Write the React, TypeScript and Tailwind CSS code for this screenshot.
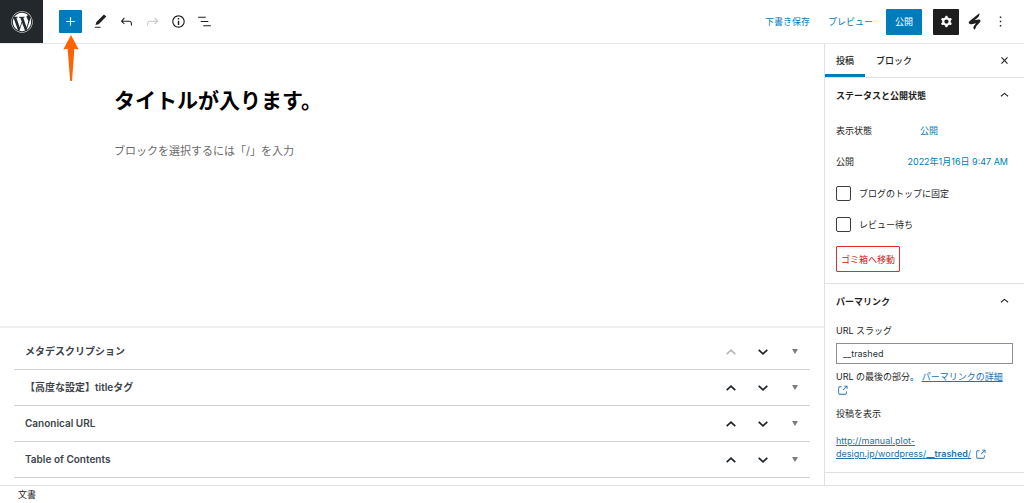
import React, { useState } from "react";
import { FaWordpress } from "react-icons/fa";

const icons = {
  plus: "M18 11.2h-5.2V6h-1.6v5.2H6v1.6h5.2V18h1.6v-5.2H18z",
  edit: "M20.1 5.1L16.9 2 6.2 12.7l-1.3 4.4 4.5-1.3L20.1 5.1zM4 20.8h8v-1.5H4v1.5z",
  undo: "M18.3 11.7c-.6-.6-1.4-.9-2.3-.9H6.7l2.9-3.3-1.1-1-4.5 5L8.5 16l1-1-2.7-2.7H16c.5 0 .9.2 1.3.5 1 1 1 3.4 1 4.5v.3h1.5v-.2c0-1.5 0-4.3-1.5-5.7z",
  redo: "M15.6 6.5l-1.1 1 2.9 3.3H8c-.9 0-1.7.3-2.3.9-1.4 1.5-1.4 4.2-1.4 5.6v.2h1.5v-.3c0-1.1 0-3.5 1-4.5.3-.3.7-.5 1.3-.5h9.2L14.5 15l1.1 1.1 4.6-4.6-4.6-5z",
  info: "M12 3.2c-4.8 0-8.8 3.9-8.8 8.8 0 4.8 3.9 8.8 8.8 8.8 4.8 0 8.8-3.9 8.8-8.8 0-4.8-4-8.8-8.8-8.8zm0 16c-4 0-7.2-3.3-7.2-7.2C4.8 8 8 4.8 12 4.8s7.2 3.3 7.2 7.2c0 4-3.2 7.2-7.2 7.2zM11 17h2v-6h-2v6zm0-8h2V7h-2v2z",
  list: "M13.8 5.2H3v1.5h10.8V5.2zm-3.6 12v1.5H21v-1.5H10.2zm7.2-6H6.6v1.5h10.8v-1.5z",
  cog: "M10.289 4.836A1 1 0 0111.275 4h1.306a1 1 0 01.987.836l.244 1.466c.787.26 1.503.679 2.108 1.218l1.393-.522a1 1 0 011.216.437l.653 1.13a1 1 0 01-.23 1.273l-1.148.944a6.025 6.025 0 010 2.435l1.149.946a1 1 0 01.23 1.272l-.653 1.13a1 1 0 01-1.216.437l-1.394-.522c-.605.54-1.32.958-2.108 1.218l-.244 1.466a1 1 0 01-.987.836h-1.306a1 1 0 01-.986-.836l-.244-1.466a5.995 5.995 0 01-2.108-1.218l-1.394.522a1 1 0 01-1.217-.436l-.653-1.131a1 1 0 01.23-1.272l1.149-.946a6.026 6.026 0 010-2.435l-1.148-.944a1 1 0 01-.23-1.272l.653-1.131a1 1 0 011.217-.437l1.393.522a5.994 5.994 0 012.108-1.218l.244-1.466zM14.929 12a3 3 0 11-6 0 3 3 0 016 0z",
  more: "M13 19h-2v-2h2v2zm0-6h-2v-2h2v2zm0-6h-2V5h2v2z",
  close: "M12 13.06l3.712 3.713 1.061-1.06L13.061 12l3.712-3.712-1.06-1.06L12 10.938 8.288 7.227l-1.061 1.06L10.939 12l-3.712 3.712 1.06 1.061L12 13.061z",
  up: "M6.5 12.4L12 8l5.5 4.4-.9 1.2L12 10l-4.5 3.6-1-1.2z",
  external: "M18.2 17c0 .7-.6 1.2-1.2 1.2H7c-.7 0-1.2-.6-1.2-1.2V7c0-.7.6-1.2 1.2-1.2h3.2V4.2H7C5.5 4.2 4.2 5.5 4.2 7v10c0 1.5 1.2 2.8 2.8 2.8h10c1.5 0 2.8-1.2 2.8-2.8v-3.6h-1.5V17zM14.9 3v1.5h3.7l-6.4 6.4 1.1 1.1 6.4-6.4v3.7h1.5V3h-6.3z",
  brush: "M18.8.4C19.6 2.600 18.400 5 16.300 6.700l-4.300 3.500 5.500-1c3-.5 3.800 1.800 2.200 3.700l-5.500 6.200c-.2 1.800-1 3.500-2.400 4.500-1.700-1.500-1.800-3.700-.4-5.500l2.800-3.600-6.400 1.300c-3.800.7-5.200-2-2.600-4.400z",
};

function Icon({ name, className = "size-[17px]" }: { name: keyof typeof icons; className?: string }) {
  return (
    <svg viewBox="0 0 24 24" fill="currentColor" fillRule="evenodd" aria-hidden="true" className={className}>
      <path d={icons[name]} />
    </svg>
  );
}

interface ToolButtonProps {
  name: keyof typeof icons;
  label: string;
  disabled?: boolean;
}

function ToolButton({ name, label, disabled }: ToolButtonProps) {
  return (
    <button
      aria-label={label}
      disabled={disabled}
      className="flex size-[26px] items-center justify-center disabled:text-[#c4c4c4]"
    >
      <Icon name={name} />
    </button>
  );
}

const metaBoxes = ["メタデスクリプション", "【高度な設定】titleタグ", "Canonical URL", "Table of Contents"];

function MetaBox({ title, first }: { title: string; first: boolean }) {
  return (
    <div className="flex h-9 items-center justify-between border-b border-[#d0d2d5] pl-[11px] text-[#3c434a]">
      <h2 className="text-[10px] font-semibold">{title}</h2>
      <div className="flex gap-[2px]">
        <button aria-label="上に移動" disabled={first} className="flex w-[30px] items-center justify-center text-[#1d2327] disabled:text-[#b5b8bb]">
          <svg viewBox="0 0 10 6" className="h-[6px] w-[10px]" fill="none" stroke="currentColor" strokeWidth="1.7">
            <path d="M.7 5.200 5 1.200l4.300 4" />
          </svg>
        </button>
        <button aria-label="下に移動" className="flex w-[30px] items-center justify-center text-[#1d2327]">
          <svg viewBox="0 0 10 6" className="h-[6px] w-[10px]" fill="none" stroke="currentColor" strokeWidth="1.7">
            <path d="M.7.800 5 4.800l4.300-4" />
          </svg>
        </button>
        <button aria-label="パネルを切り替え" className="flex w-[30px] items-center justify-center text-[#787c82]">
          <svg viewBox="0 0 6 5" className="h-[5px] w-[6px]" fill="currentColor">
            <path d="M0 0h6L3 5z" />
          </svg>
        </button>
      </div>
    </div>
  );
}

function PanelTitle({ children }: { children: React.ReactNode }) {
  return (
    <h2>
      <button className="flex h-[35px] w-full items-center justify-between text-left font-semibold">
        {children}
        <Icon name="up" />
      </button>
    </h2>
  );
}

function CheckRow({ label }: { label: string }) {
  const [checked, setChecked] = useState(false);
  return (
    <label className="flex items-center gap-2">
      <input
        type="checkbox"
        checked={checked}
        onChange={(e) => setChecked(e.target.checked)}
        className="size-[15px] appearance-none rounded-[2px] border border-[#3c3c3c] checked:bg-[#007cba]"
      />
      {label}
    </label>
  );
}

export default function App() {
  const [slug, setSlug] = useState("__trashed");

  return (
    <div className="flex h-screen flex-col overflow-hidden bg-white font-['Inter','Noto_Sans_CJK_JP',sans-serif] text-[9px] leading-[13px] text-[#1e1e1e]">
      <header className="flex h-11 shrink-0 items-center justify-between border-b border-[#e8e8e8] pr-[11px]">
        <div className="flex items-center self-stretch">
          <a href="#" aria-label="WordPress" className="flex w-[43px] items-center justify-center self-stretch bg-[#23282d] text-white">
            <FaWordpress className="size-[22px]" />
          </a>
          <div className="relative ml-4 mr-[5px]">
            <button aria-label="ブロックを追加" className="flex size-[23px] items-center justify-center rounded-[1px] bg-[#007cba] text-white">
              <Icon name="plus" />
            </button>
            <svg viewBox="0 0 16 46" className="absolute left-1/2 top-full z-10 mt-[2px] h-[46px] w-4 -translate-x-1/2" fill="#ff6200" aria-hidden="true">
              <path d="M8 0 15.700 14.500 11.400 13.700 9 46H7.200L4.600 13.700.3 14.500z" />
            </svg>
          </div>
          <ToolButton name="edit" label="ツール" />
          <ToolButton name="undo" label="元に戻す" />
          <ToolButton name="redo" label="やり直す" disabled />
          <ToolButton name="info" label="詳細" />
          <ToolButton name="list" label="リスト表示" />
        </div>
        <div className="flex items-center">
          <button className="mr-[18px] text-[#007cba]">下書き保存</button>
          <button className="mr-[13px] text-[#007cba]">プレビュー</button>
          <button className="mr-[11px] h-[26px] rounded-[1px] bg-[#007cba] px-[9px] text-white">公開</button>
          <button aria-label="設定" className="mr-[2px] flex size-[26px] items-center justify-center rounded-[1px] bg-[#1e1e1e] text-white">
            <Icon name="cog" />
          </button>
          <ToolButton name="brush" label="プラグイン" />
          <ToolButton name="more" label="オプション" />
        </div>
      </header>

      <div className="flex min-h-0 flex-1">
        <main className="flex min-w-0 flex-1 flex-col">
          <div className="mx-auto w-full max-w-[596px] flex-1 pt-[41px]">
            <h1 className="text-[21px] font-bold leading-8 text-black">タイトルが入ります。</h1>
            <p className="mt-6 text-[11px] leading-5 text-[#6b6b6b]">ブロックを選択するには「/」を入力</p>
          </div>
          <div className="border-t-2 border-[#f0f0f0] px-[14px] pb-[7px] pt-[6px]">
            {metaBoxes.map((title, i) => (
              <MetaBox key={title} title={title} first={i === 0} />
            ))}
          </div>
        </main>

        <aside className="w-[200px] shrink-0 overflow-hidden border-l border-[#e0e0e0]">
          <div className="flex h-[34px] items-stretch border-b border-[#e0e0e0] pr-[11px] font-medium">
            <button className="border-b-3 border-[#007cba] px-[11px] pt-[3px]">投稿</button>
            <button className="px-[11px]">ブロック</button>
            <button aria-label="閉じる" className="ml-auto">
              <Icon name="close" />
            </button>
          </div>

          <section className="border-b border-[#e0e0e0] px-[11px] pb-[11px]">
            <PanelTitle>ステータスと公開状態</PanelTitle>
            <div className="mt-[11px] flex flex-col gap-[18px]">
              <div className="flex">
                <span className="w-[84px]">表示状態</span>
                <button className="text-[#007cba]">公開</button>
              </div>
              <div className="flex justify-between pr-[5px]">
                <span>公開</span>
                <button className="text-[#007cba]">2022年1月16日 9:47 AM</button>
              </div>
            </div>
            <div className="mt-[18px] flex flex-col gap-4">
              <CheckRow label="ブログのトップに固定" />
              <CheckRow label="レビュー待ち" />
            </div>
            <button className="mt-[14px] h-[26px] rounded-[1px] border border-[#d9302f] px-1 text-[#cc1818]">ゴミ箱へ移動</button>
          </section>

          <section className="border-b border-[#e0e0e0] px-[11px] pb-[11px]">
            <PanelTitle>パーマリンク</PanelTitle>
            <label htmlFor="slug" className="mt-[5px] block">URL スラッグ</label>
            <input
              id="slug"
              value={slug}
              onChange={(e) => setSlug(e.target.value)}
              className="mt-[6px] h-[21px] w-full border border-[#8c8f94] px-[6px] text-[#2c3338]"
            />
            <p className="mt-[6px]">
              URL の最後の部分。{" "}
              <a href="#" className="text-[#2271b1]">
                <span className="underline">パーマリンクの詳細</span>{" "}
                <Icon name="external" className="inline size-[13px]" />
              </a>
            </p>
            <h3 className="mt-[10px]">投稿を表示</h3>
            <p className="mt-[14px]">
              <a href="#" className="text-[#2271b1]">
                <span className="underline">
                  http://manual.plot-design.jp/wordpress/<b className="font-semibold">__trashed</b>/
                </span>{" "}
                <Icon name="external" className="inline size-[13px]" />
              </a>
            </p>
          </section>
        </aside>
      </div>

      <footer className="flex h-[18px] shrink-0 items-center border-t border-[#e0e0e0] bg-white px-[18px]">文書</footer>
    </div>
  );
}
